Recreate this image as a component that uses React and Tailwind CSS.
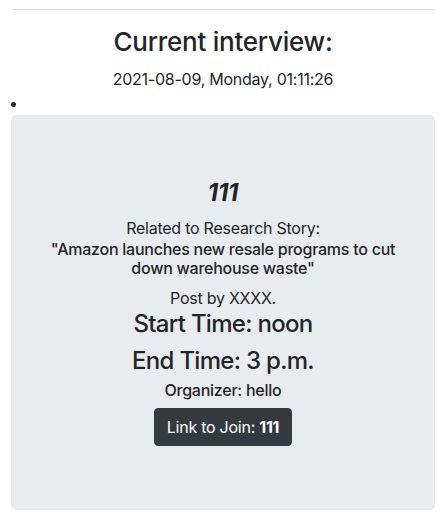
export default function App() {
  return (
    <div className="h-screen overflow-hidden bg-white pl-[11px] pr-[5px] text-[#212529] tracking-[-0.25px] font-['Inter','Noto_Sans',sans-serif]">
      <hr className="pt-[9px] border-0" />
      <div className="border-t border-[#e3e3e3]" />

      <div className="text-center">
        <h2 className="mt-[16px] text-[26px] leading-[1.2] font-medium">Current interview:</h2>
        <p className="mt-[10px] text-[16px] leading-6">2021-08-09, Monday, 01:11:26</p>
      </div>

      <ul className="list-disc list-inside">
        <li className="leading-6">
          <div className="bg-[#e9ecef] rounded-[5px] px-8 py-16 text-center">
            <h3 className="text-[24px] leading-[1.2] font-bold italic mb-2">111</h3>
            <p className="text-[16px] leading-6">Related to Research Story:</p>
            <h6 className="text-[16px] leading-[1.2] font-medium mb-2">
              "Amazon launches new resale programs to cut down warehouse waste"
            </h6>
            <p className="text-[16px] leading-6">Post by XXXX.</p>
            <h4 className="text-[24px] leading-[1.2] font-medium tracking-[-0.7px] mb-2">Start Time: noon</h4>
            <h4 className="text-[24px] leading-[1.2] font-medium tracking-[-0.7px] mb-[5px]">End Time: 3 p.m.</h4>
            <h6 className="text-[16px] leading-[1.2] font-medium mb-2">Organizer: hello</h6>
            <button className="bg-[#343a40] border border-[#343a40] text-white rounded-[4px] px-3 py-[6px] text-[16px] leading-6">
              Link to Join: <b className="font-bold">111</b>
            </button>
          </div>
        </li>
      </ul>
    </div>
  );
}
